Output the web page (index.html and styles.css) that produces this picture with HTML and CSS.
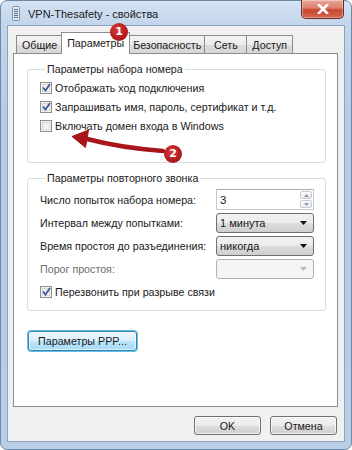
FILE: index.html
```html
<!DOCTYPE html>
<html lang="ru">
<head>
<meta charset="utf-8">
<link rel="stylesheet" href="styles.css">
</head>
<body>
<div class="window">
  <div class="titlebar">
    <svg class="app-icon" width="8" height="15" viewBox="0 0 8 15">
      <rect x="0.5" y="0.5" width="7" height="14" rx="1" fill="#dfe7f0" stroke="#7f93aa"/>
      <rect x="2" y="3" width="4" height="1" fill="#5b7390"/>
      <rect x="2" y="5" width="4" height="1" fill="#5b7390"/>
      <rect x="2" y="7" width="4" height="1" fill="#5b7390"/>
      <rect x="2" y="9" width="4" height="1" fill="#5b7390"/>
      <rect x="2" y="11" width="4" height="1" fill="#5b7390"/>
    </svg>
    <span class="title">VPN-Thesafety - свойства</span>
    <div class="close">
      <svg width="12" height="10" viewBox="0 0 12 10">
        <path d="M2 1 L10 9 M10 1 L2 9" stroke="#ffffff" stroke-width="2.6" stroke-linecap="square"/>
      </svg>
    </div>
  </div>
  <div class="client">
    <div class="tabs">
      <div class="tab tab-first">Общие</div>
      <div class="tab active">Параметры</div>
      <div class="tab after-active">Безопасность</div>
      <div class="tab">Сеть</div>
      <div class="tab">Доступ</div>
    </div>
    <div class="panel">
      <fieldset class="group g1">
        <legend>Параметры набора номера</legend>
        <div class="check"><span class="box checked"><svg width="9" height="9" viewBox="0 0 9 9"><path d="M1 4.5 L3.5 7.5 L8 1" fill="none" stroke="#3d5896" stroke-width="1.8"/></svg></span>Отображать ход подключения</div>
        <div class="check"><span class="box checked"><svg width="9" height="9" viewBox="0 0 9 9"><path d="M1 4.5 L3.5 7.5 L8 1" fill="none" stroke="#3d5896" stroke-width="1.8"/></svg></span>Запрашивать имя, пароль, сертификат и т.д.</div>
        <div class="check"><span class="box"></span>Включать домен входа в Windows</div>
      </fieldset>
      <fieldset class="group g2">
        <legend>Параметры повторного звонка</legend>
        <div class="row">
          <span>Число попыток набора номера:</span>
          <div class="spin">
            <span class="spin-val">3</span>
            <div class="spin-btns">
              <span class="sbtn"><svg width="5" height="3" viewBox="0 0 5 3"><path d="M0 3 L2.5 0 L5 3Z" fill="#8a96a6"/></svg></span>
              <span class="sbtn"><svg width="5" height="3" viewBox="0 0 5 3"><path d="M0 0 L2.5 3 L5 0Z" fill="#8a96a6"/></svg></span>
            </div>
          </div>
        </div>
        <div class="row">
          <span>Интервал между попытками:</span>
          <div class="combo"><span>1 минута</span><svg width="7" height="4" viewBox="0 0 7 4"><path d="M0 0 L7 0 L3.5 4Z" fill="#111"/></svg></div>
        </div>
        <div class="row">
          <span>Время простоя до разъединения:</span>
          <div class="combo"><span>никогда</span><svg width="7" height="4" viewBox="0 0 7 4"><path d="M0 0 L7 0 L3.5 4Z" fill="#111"/></svg></div>
        </div>
        <div class="row">
          <span class="muted">Порог простоя:</span>
          <div class="combo disabled"><span></span><svg width="7" height="4" viewBox="0 0 7 4"><path d="M0 0 L7 0 L3.5 4Z" fill="#b5b9bd"/></svg></div>
        </div>
        <div class="check last"><span class="box checked"><svg width="9" height="9" viewBox="0 0 9 9"><path d="M1 4.5 L3.5 7.5 L8 1" fill="none" stroke="#3d5896" stroke-width="1.8"/></svg></span>Перезвонить при разрыве связи</div>
      </fieldset>
      <button class="btn ppp">Параметры PPP...</button>
    </div>
    <div class="footer">
      <button class="btn">OK</button>
      <button class="btn">Отмена</button>
    </div>
  </div>
  <div class="badge b1">1</div>
  <svg class="arrow" width="352" height="450" viewBox="0 0 352 450">
    <path d="M87 139 Q122 148 163 151" fill="none" stroke="#a8161b" stroke-width="4.5" stroke-linecap="round"/>
    <path d="M72 136.5 L88.5 130 L85.5 147.5 Z" fill="#a8161b" stroke="#a8161b" stroke-width="1" stroke-linejoin="round"/>
  </svg>
  <div class="badge b2">2</div>
</div>
</body>
</html>
```

FILE: styles.css
```css
* { box-sizing: border-box; }
html, body { margin: 0; padding: 0; }
body {
  background: #ffffff;
  font-family: "Liberation Sans", Arial, sans-serif;
  font-size: 10.7px;
  color: #1a1a1a;
}
.window {
  position: relative;
  width: 352px;
  height: 450px;
  border: 1px solid #6e89a8;
  border-radius: 7px;
  background: linear-gradient(180deg, #d5e3f3 0px, #c2d5ec 24px, #b6cbe5 120px, #b9cde6 100%);
  padding: 0 6px 7px 6px;
  display: flex;
  flex-direction: column;
}
.titlebar {
  height: 24px;
  display: flex;
  align-items: center;
  padding-left: 5px;
}
.app-icon { margin-right: 8px; margin-top: 1px; }
.title {
  font-size: 11px;
  color: #1b1b1b;
  margin-top: 1px;
  white-space: nowrap;
}
.close {
  margin-left: auto;
  align-self: flex-start;
  margin-right: 1px;
  margin-top: -1px;
  width: 43px;
  height: 19px;
  border: 1px solid #6d2b26;
  border-top: none;
  border-radius: 0 0 5px 5px;
  background: linear-gradient(180deg, #e9a899 0%, #dc7e6b 45%, #c8452f 55%, #d5684d 100%);
  box-shadow: inset 0 0 0 1px rgba(255,255,255,0.35);
  display: flex;
  align-items: center;
  justify-content: center;
}
.client {
  flex: 1;
  background: #f0f0f0;
  border: 1px solid #8ca2bd;
  padding: 6px 6px 0 5px;
  display: flex;
  flex-direction: column;
}
.tabs {
  height: 22px;
  display: flex;
  align-items: flex-end;
  padding-left: 3px;
  margin-bottom: -1px;
}
.tab {
  height: 19px;
  min-width: 43px;
  text-align: center;
  border: 1px solid #898c95;
  border-bottom: none;
  background: linear-gradient(180deg, #f3f3f3 0%, #ebebeb 50%, #dddddd 51%, #d6d6d6 100%);
  padding: 0 5px;
  line-height: 18px;
  color: #1a1a1a;
  margin-left: -1px;
  white-space: nowrap;
}
.tab-first { margin-left: 0; }
.tab.active {
  position: relative;
  z-index: 1;
  height: 22px;
  background: #ffffff;
  margin-left: -2px;
  margin-right: -2px;
  padding: 0 5px;
  line-height: 21px;
}
.after-active { margin-left: 0; padding: 0 3px 0 4px; }
.panel {
  height: 354px;
  background: #ffffff;
  border: 1px solid #898c95;
  padding: 8px 11px 0 13px;
  display: flex;
  flex-direction: column;
  align-items: flex-start;
}
.group {
  align-self: stretch;
  margin: 0;
  border: 1px solid #d5dfe5;
  border-radius: 3px;
  padding: 2px 11px 27px 12px;
  min-width: 0;
}
.group legend {
  padding: 0 2px;
  margin-left: 5px;
  line-height: 14px;
  color: #1a1a1a;
}
.g2 {
  margin-top: 8px;
  padding: 4px 11px 9px 12px;
}
.check {
  height: 19px;
  display: flex;
  align-items: center;
  white-space: nowrap;
}
.check.last { margin-top: 3px; }
.box {
  width: 12px;
  height: 12px;
  border: 1px solid #8e8f8f;
  background: linear-gradient(135deg, #e4e4e4 0%, #f6f6f6 60%, #ffffff 100%);
  box-shadow: inset 0 0 0 1px #f4f4f4, inset 0 0 0 2px #d6d6d6;
  margin-right: 3px;
  flex: none;
  display: flex;
  align-items: center;
  justify-content: center;
}
.row {
  height: 21px;
  display: flex;
  align-items: center;
  margin-bottom: 2px;
  white-space: nowrap;
}
.muted { color: #6d6d6d; }
.spin {
  margin-left: auto;
  width: 98px;
  height: 21px;
  border: 1px solid #c5cad1;
  border-top-color: #abadb3;
  display: flex;
  align-items: center;
  padding: 0 1px 0 3px;
}
.spin-val { flex: 1; font-size: 11.5px; }
.spin-btns {
  display: flex;
  flex-direction: column;
  gap: 1px;
}
.sbtn {
  width: 12px;
  height: 8px;
  border: 1px solid #c8ccd2;
  border-radius: 2px;
  background: linear-gradient(180deg, #fbfbfb, #e9ecef);
  display: flex;
  align-items: center;
  justify-content: center;
}
.combo {
  margin-left: auto;
  width: 98px;
  height: 20px;
  border: 1px solid #707070;
  border-radius: 3px;
  background: linear-gradient(180deg, #f2f2f2 0%, #ebebeb 50%, #dddddd 51%, #cfcfcf 100%);
  display: flex;
  align-items: center;
  justify-content: space-between;
  padding: 0 6px 0 3px;
  font-size: 11px;
}
.combo.disabled {
  border-color: #adb2b5;
  background: #f4f4f4;
}
.btn {
  font-family: inherit;
  font-size: 10.7px;
  color: #1a1a1a;
  height: 19px;
  border: 1px solid #707070;
  border-radius: 3px;
  background: linear-gradient(180deg, #f2f2f2 0%, #ebebeb 50%, #dddddd 51%, #cfcfcf 100%);
  box-shadow: inset 0 0 0 1px rgba(255,255,255,0.7);
  padding: 0;
  line-height: 16px;
}
.ppp {
  margin-top: 20px;
  margin-left: 1px;
  width: 109px;
  height: 20px;
  border-color: #3c7fb1;
  background: linear-gradient(180deg, #eaf6fd 0%, #d9f0fc 50%, #bee6fd 51%, #a7d9f5 100%);
  box-shadow: inset 0 0 0 1px rgba(255,255,255,0.6), 0 0 0 1px #5ec3e6;
}
.footer {
  margin-top: 9px;
  display: flex;
  justify-content: flex-end;
  gap: 9px;
  padding-right: 1px;
}
.footer .btn { width: 67px; }
.badge {
  position: absolute;
  width: 18px;
  height: 18px;
  border-radius: 50%;
  background: radial-gradient(circle at 40% 35%, #d83a3a 0%, #b51d1f 55%, #8d1214 100%);
  color: #ffffff;
  font-family: "DejaVu Sans", sans-serif;
  font-weight: bold;
  font-size: 11px;
  line-height: 18px;
  text-align: center;
}
.b1 { left: 109px; top: 22px; z-index: 3; }
.b2 { left: 163px; top: 144px; z-index: 3; }
.arrow {
  position: absolute;
  left: -1px;
  top: -1px;
  pointer-events: none;
  z-index: 2;
}
```
